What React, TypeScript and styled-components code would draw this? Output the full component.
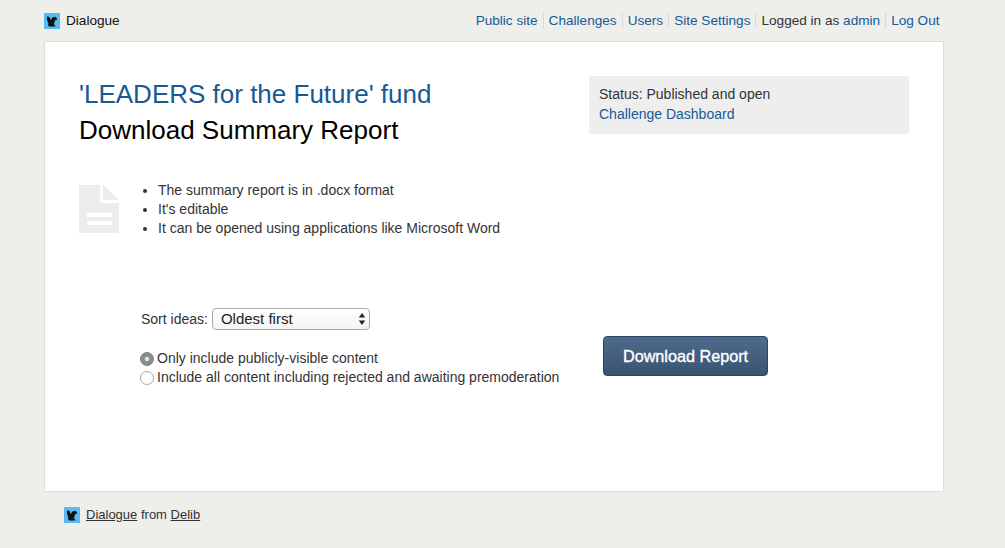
import styled, { createGlobalStyle } from 'styled-components';

const GlobalStyle = createGlobalStyle`
  html, body {
    margin: 0;
    padding: 0;
    background: #eeeeea;
    color: #333;
    font-family: "Liberation Sans", Arial, sans-serif;
    font-size: 14px;
    line-height: 19px;
  }
`;

const Page = styled.div`
  width: 1005px;
  height: 548px;
  overflow: hidden;
  padding: 0 61px 0 44px;
  box-sizing: border-box;
`;

const Header = styled.header`
  height: 41px;
  display: flex;
  align-items: center;
  justify-content: space-between;
  padding-right: 4.5px;
  font-size: 13.6px;
`;

const Brand = styled.div`
  display: flex;
  align-items: center;
  gap: 6px;
  color: #111;
`;

const Nav = styled.nav`
  display: flex;
  align-items: center;
`;

const NavItem = styled.span`
  padding: 0 5px;
  line-height: 15px;
  border-left: 1px solid #d8d8d4;
  color: #333;

  &:first-child {
    border-left: 0;
  }

  &:last-child {
    padding-right: 0;
  }
`;

const Link = styled.a`
  color: #175a96;
  text-decoration: none;
`;

const Card = styled.main`
  height: 451px;
  box-sizing: border-box;
  background: #fff;
  border: 1px solid #deded9;
  padding: 34px;
`;

const TopRow = styled.div`
  display: flex;
  justify-content: space-between;
  align-items: flex-start;
`;

const Title = styled.h1`
  margin: 0;
  font-size: 26px;
  line-height: 36px;
  font-weight: 400;
  color: #175a96;
`;

const Subtitle = styled.h2`
  margin: 0;
  font-size: 26px;
  line-height: 36px;
  font-weight: 400;
  color: #000;
`;

const StatusBox = styled.aside`
  width: 320px;
  height: 58px;
  box-sizing: border-box;
  padding: 8px 10px;
  line-height: 20px;
  background: #eeeeee;
  border-radius: 3px;
`;

const DocRow = styled.section`
  display: flex;
  margin-top: 33px;
`;

const DocIconWrap = styled.div`
  width: 40px;
  height: 48px;
  margin-top: 4px;
`;

const Points = styled.ul`
  margin: 0 0 0 39px;
  padding: 0;
  list-style-position: outside;
`;

const Point = styled.li`
  line-height: 19px;
`;

const FormRow = styled.section`
  display: flex;
  margin: 70px 0 0 62px;
`;

const FormFields = styled.div`
  width: 462px;
`;

const SortRow = styled.label`
  display: flex;
  align-items: center;
  gap: 4px;
  height: 22px;
`;

const SelectWrap = styled.span`
  position: relative;
  display: block;
  width: 158px;
  height: 22px;
`;

const Select = styled.select`
  appearance: none;
  display: block;
  width: 100%;
  height: 100%;
  box-sizing: border-box;
  padding: 0 8px 1px;
  border: 1px solid #a9a9a9;
  border-radius: 4px;
  background: linear-gradient(#ffffff, #f4f4f4);
  color: #222;
  font: 15px "Liberation Sans", Arial, sans-serif;
`;

const SelectArrows = styled.svg`
  position: absolute;
  top: 5px;
  right: 4px;
  pointer-events: none;
`;

const Radios = styled.div`
  margin-top: 19px;
`;

const RadioRow = styled.label`
  display: flex;
  align-items: center;
  gap: 2px;
  height: 19px;
`;

const Radio = styled.input`
  appearance: none;
  flex: none;
  box-sizing: content-box;
  width: 12px;
  height: 12px;
  margin: 0 1px 0 -1px;
  border-radius: 50%;
  border: 1px solid #a8a8a8;
  background: #fff;

  &:checked {
    border-color: #808080;
    background: radial-gradient(circle, #e4e4e4 0, #e4e4e4 1.6px, #8c8c8c 2.8px);
  }
`;

const DownloadButton = styled.button`
  width: 165px;
  height: 40px;
  margin-top: 28px;
  padding: 1px 0 0;
  border: 1px solid #2c4563;
  border-radius: 4px;
  background: linear-gradient(#4e6b8d, #3a5372);
  color: #fff;
  font: 400 16.2px "Liberation Sans", Arial, sans-serif;
  -webkit-text-stroke: 0.35px #fff;
  cursor: pointer;
`;

const Footer = styled.footer`
  display: flex;
  align-items: center;
  gap: 6px;
  margin-top: 13px;
  padding-left: 20px;
  font-size: 13px;
  color: #333;
`;

const FooterLink = styled.a`
  color: #333;
  text-decoration: underline;
`;

const Logo = () => (
  <svg width="16" height="16" viewBox="0 0 16 16" aria-hidden="true">
    <rect width="16" height="16" fill="#58bbf2" />
    <path
      d="M3 3.6C4.6 2.9 6 4 6.2 5.6L6.8 7.4C7.4 6 8.2 4.6 9.4 4.1L10.4 4.4 11 3.5C11.9 4 12.8 4.9 13 5.9 13.1 6.8 12 7.3 10.8 7.2 10.9 8.8 10.4 10.3 9.5 11.2 10.5 11.4 11.3 12.2 11.5 13.6H5.2C3.9 12.8 4 11.2 4.4 10 3.2 8.2 2.7 5.3 3 3.6z"
      fill="#111"
    />
  </svg>
);

const DocIcon = () => (
  <svg width="40" height="48" viewBox="0 0 40 48" aria-hidden="true">
    <path
      d="M0 0H21V18H40V48H0zM8 28v4h25v-4zM8 36v4h25v-4z"
      fill="#ececec"
      fillRule="evenodd"
    />
    <path d="M24 0L40 15H24z" fill="#ececec" />
  </svg>
);

export default function App() {
  return (
    <Page>
      <GlobalStyle />
      <Header>
        <Brand>
          <Logo />
          Dialogue
        </Brand>
        <Nav>
          <NavItem><Link href="#">Public site</Link></NavItem>
          <NavItem><Link href="#">Challenges</Link></NavItem>
          <NavItem><Link href="#">Users</Link></NavItem>
          <NavItem><Link href="#">Site Settings</Link></NavItem>
          <NavItem>Logged in as <Link href="#">admin</Link></NavItem>
          <NavItem><Link href="#">Log Out</Link></NavItem>
        </Nav>
      </Header>

      <Card>
        <TopRow>
          <div>
            <Title>'LEADERS for the Future' fund</Title>
            <Subtitle>Download Summary Report</Subtitle>
          </div>
          <StatusBox>
            Status: Published and open
            <br />
            <Link href="#">Challenge Dashboard</Link>
          </StatusBox>
        </TopRow>

        <DocRow>
          <DocIconWrap>
            <DocIcon />
          </DocIconWrap>
          <Points>
            <Point>The summary report is in .docx format</Point>
            <Point>It's editable</Point>
            <Point>It can be opened using applications like Microsoft Word</Point>
          </Points>
        </DocRow>

        <FormRow>
          <FormFields>
            <SortRow>
              Sort ideas:
              <SelectWrap>
                <Select defaultValue="oldest">
                  <option value="oldest">Oldest first</option>
                  <option value="newest">Newest first</option>
                </Select>
                <SelectArrows width="8" height="12" viewBox="0 0 8 12" aria-hidden="true">
                  <path d="M4 0l3.2 4.6H.8zM4 12L.8 7.4h6.4z" fill="#222" />
                </SelectArrows>
              </SelectWrap>
            </SortRow>
            <Radios>
              <RadioRow>
                <Radio type="radio" name="content" defaultChecked />
                Only include publicly-visible content
              </RadioRow>
              <RadioRow>
                <Radio type="radio" name="content" />
                Include all content including rejected and awaiting premoderation
              </RadioRow>
            </Radios>
          </FormFields>
          <DownloadButton>Download Report</DownloadButton>
        </FormRow>
      </Card>

      <Footer>
        <Logo />
        <span>
          <FooterLink href="#">Dialogue</FooterLink> from <FooterLink href="#">Delib</FooterLink>
        </span>
      </Footer>
    </Page>
  );
}
